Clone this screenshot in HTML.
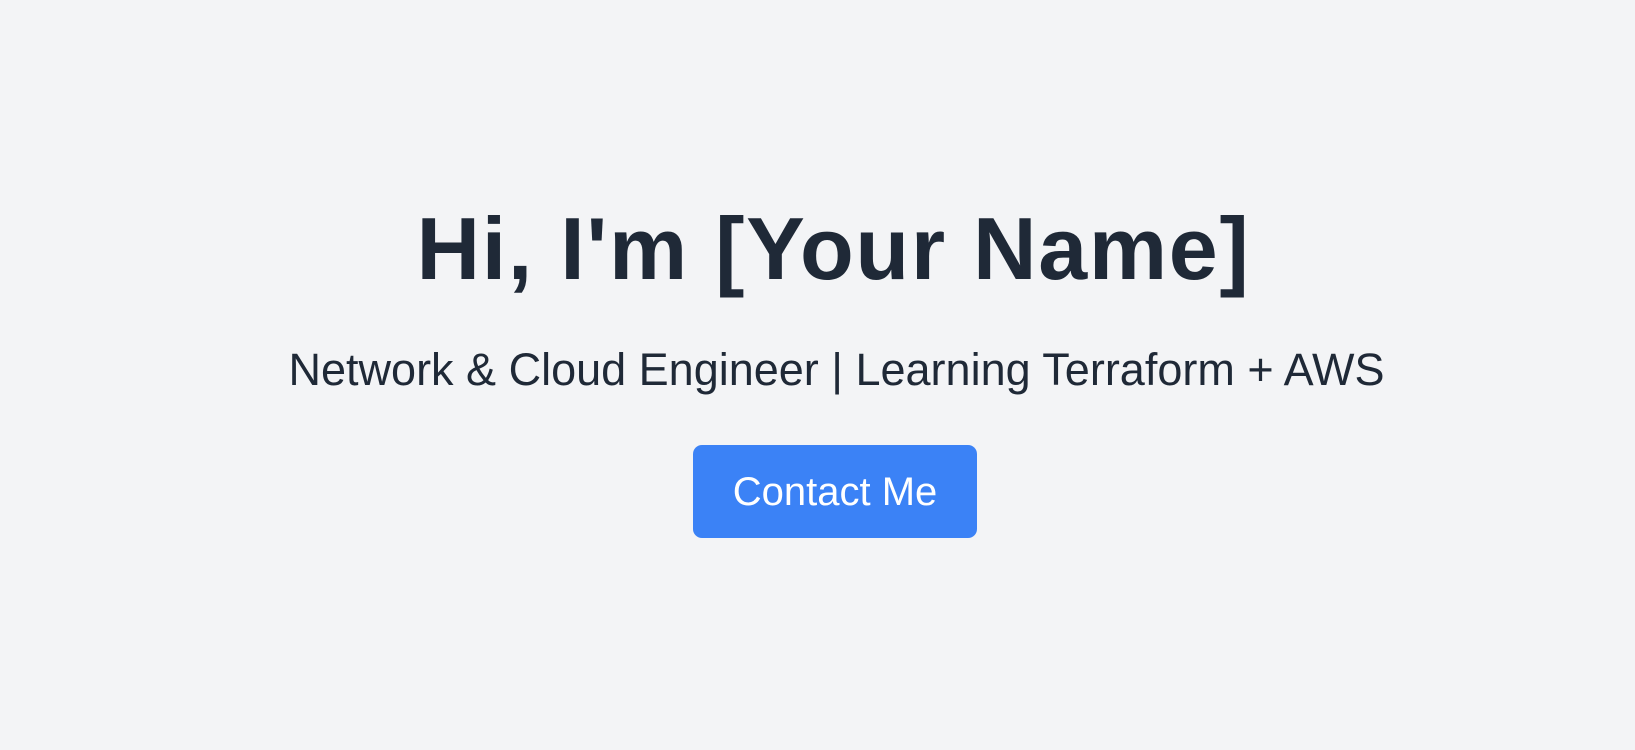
<!DOCTYPE html>
<html><head><meta charset="utf-8"><style>
html,body{margin:0;padding:0;width:1635px;height:750px;background:#f3f4f6;overflow:hidden;font-family:"Liberation Sans",sans-serif;color:#1f2937}
.h{position:absolute;left:0;width:1635px;text-align:center;white-space:nowrap}
h1{margin:0;font-weight:bold;font-size:88px;line-height:88px;top:205px;letter-spacing:1.7px;left:16px !important}
p{margin:0;font-size:45px;line-height:45px;top:347px;left:19px !important}
.btn{position:absolute;left:693px;top:445px;width:284px;height:93px;background:#3b82f6;border-radius:9px;color:#fff;font-size:40px;line-height:95px;text-align:center}
</style></head><body>
<h1 class="h">Hi, I'm [Your Name]</h1>
<p class="h">Network &amp; Cloud Engineer | Learning Terraform + AWS</p>
<div class="btn">Contact Me</div>
</body></html>
